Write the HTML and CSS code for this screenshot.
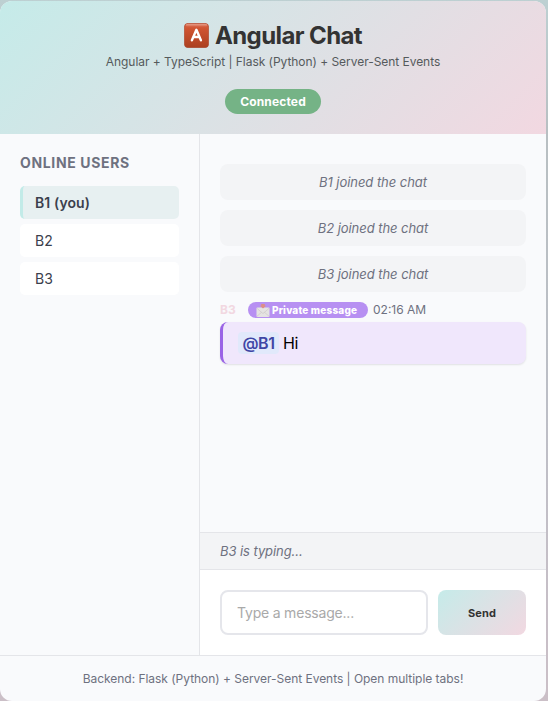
FILE: index.html
```html
<!DOCTYPE html>
<html lang="en">
<head>
<meta charset="utf-8">
<title>Angular Chat</title>
<link rel="stylesheet" href="styles.css">
</head>
<body>
<div class="chat">
  <header class="header">
    <h1 class="title">
      <svg class="logo" viewBox="0 0 25 25" aria-hidden="true">
        <defs>
          <linearGradient id="red" x1="0" y1="0" x2="0" y2="1"><stop offset="0" stop-color="#d8674a"/><stop offset=".22" stop-color="#cf5431"/><stop offset="1" stop-color="#ab4020"/></linearGradient>
          <linearGradient id="gloss" x1="0" y1="0" x2="0" y2="1"><stop offset="0" stop-color="#e59a84"/><stop offset="1" stop-color="#d8674a"/></linearGradient>
        </defs>
        <rect x=".3" y=".3" width="24.4" height="24.4" rx="4" fill="url(#red)" stroke="#a8452b" stroke-width=".6"/>
        <rect x="1.8" y="1" width="21.4" height="2.6" rx="1.3" fill="url(#gloss)"/>
        <path d="M7.9 17.300 12.4 6.800 16.900 17.300M9.4 14h6" fill="none" stroke="#fff" stroke-width="2.400" stroke-linecap="round" stroke-linejoin="round"/>
      </svg>
      <span>Angular Chat</span>
    </h1>
    <p class="subtitle">Angular + TypeScript | Flask (Python) + Server-Sent Events</p>
    <span class="status">Connected</span>
  </header>
  <div class="body">
    <aside class="sidebar">
      <h2 class="heading">ONLINE USERS</h2>
      <ul class="users">
        <li class="user me">B1 (you)</li>
        <li class="user">B2</li>
        <li class="user">B3</li>
      </ul>
    </aside>
    <main class="main">
      <div class="messages">
        <div class="system">B1 joined the chat</div>
        <div class="system">B2 joined the chat</div>
        <div class="system">B3 joined the chat</div>
        <div class="message">
          <div class="meta">
            <span class="author">B3</span>
            <span class="private">
              <svg class="mail" viewBox="0 0 14 14" aria-hidden="true">
                <rect x=".5" y="4.5" width="13" height="9.5" rx="1" fill="#e5e3e2"/>
                <path d="M.7 13.5 5.5 9.3M13.3 13.5 8.5 9.3M.7 5l5.5 5q.8.6 1.6 0l5.5-5" fill="none" stroke="#c9c5c5" stroke-width=".6"/>
                <path d="M5.200 1h3.600v1.800h1.300L7 5.400 3.900 2.800h1.300z" fill="#dc8e86"/>
              </svg>
              <span>Private message</span>
            </span>
            <span class="time">02:16 AM</span>
          </div>
          <div class="bubble"><span class="mention">@B1</span><span class="text">Hi</span></div>
        </div>
      </div>
      <div class="typing">B3 is typing...</div>
      <form class="composer">
        <input class="input" type="text" placeholder="Type a message...">
        <button class="send" type="button">Send</button>
      </form>
    </main>
  </div>
  <footer class="footer"><span>Backend: Flask (Python) + Server-Sent Events | Open multiple tabs!</span></footer>
</div>
</body>
</html>
```
FILE: styles.css
```css
* { box-sizing: border-box; margin: 0; padding: 0; }
body {
  width: 548px;
  height: 701px;
  padding: 1px 2px 0 0;
  overflow: hidden;
  font-family: Inter, "Liberation Sans", sans-serif;
  background: linear-gradient(180deg, #bdd0d2 0, #b8bfc2 130px, #bcbec6 400px, #cbbfc7 100%);
}
.chat {
  display: flex;
  flex-direction: column;
  height: 700px;
  border-radius: 12px;
  overflow: hidden;
  background: #f9fafc;
}
.header {
  height: 133px;
  padding-top: 20px;
  display: flex;
  flex-direction: column;
  align-items: center;
  background: linear-gradient(135deg, #c5ebe9 0%, #f2d8e1 100%);
}
.title {
  display: flex;
  align-items: center;
  gap: 6px;
  height: 29px;
  font-size: 24px;
  font-weight: 700;
  line-height: 29px;
  letter-spacing: -0.6px;
  color: #333;
}
.logo { width: 25px; height: 25px; }
.subtitle {
  margin-top: 4px;
  height: 16px;
  line-height: 16px;
  font-size: 12px;
  letter-spacing: -0.04px;
  color: #555a5c;
}
.status {
  margin-top: 19px;
  width: 96px;
  height: 25px;
  border-radius: 13px;
  background: #75b386;
  color: #fff;
  font-size: 12px;
  font-weight: 700;
  letter-spacing: .15px;
  line-height: 25px;
  text-align: center;
}
.body { display: flex; height: 521px; }
.sidebar {
  width: 200px;
  padding: 20px;
  border-right: 1px solid #e4e5e9;
}
.heading {
  height: 18px;
  line-height: 18px;
  font-size: 14px;
  font-weight: 700;
  letter-spacing: .65px;
  color: #6e7180;
}
.users { list-style: none; margin-top: 14px; display: flex; flex-direction: column; gap: 5px; }
.user {
  height: 33px;
  padding-left: 15px;
  border-radius: 5px;
  line-height: 34px;
  font-size: 14px;
  color: #3b404d;
  background: #fff;
}
.me {
  padding-left: 12px;
  border-left: 3px solid #c2ebe8;
  background: #e7f0f1;
  font-weight: 600;
  letter-spacing: .12px;
}
.main { flex: 1; display: flex; flex-direction: column; }
.messages { flex: 1; padding: 30px 20px 0; display: flex; flex-direction: column; gap: 10px; }
.system {
  height: 36px;
  border-radius: 8px;
  background: #f3f4f6;
  line-height: 36px;
  font-size: 13px;
  font-style: italic;
  letter-spacing: -0.05px;
  text-align: center;
  color: #6e7180;
}
.meta { display: flex; align-items: center; height: 16px; font-size: 12px; line-height: 16px; }
.author { width: 28px; font-weight: 700; color: #f2d8e1; }
.private {
  display: flex;
  align-items: center;
  gap: 2px;
  width: 120px;
  height: 16px;
  padding-left: 8px;
  border-radius: 8px;
  background: #b790f2;
  color: #fff;
  font-size: 10px;
  font-weight: 800;
  letter-spacing: .18px;
}
.mail { width: 14px; height: 14px; }
.time { margin-left: 5px; color: #6e7180; }
.bubble {
  display: flex;
  align-items: center;
  gap: 4px;
  height: 42px;
  margin-top: 4px;
  padding-left: 15px;
  border-left: 3px solid #9a63e6;
  border-radius: 8px;
  background: #f0e7fc;
  box-shadow: 0 1px 2px rgba(0, 0, 0, .1);
  font-size: 16px;
  color: #000;
}
.text { letter-spacing: -0.3px; }
.mention {
  width: 41px;
  height: 22px;
  border-radius: 4px;
  background: #e1e9fb;
  color: #3f46a5;
  font-weight: 600;
  letter-spacing: -0.4px;
  line-height: 22px;
  text-align: center;
}
.typing {
  height: 38px;
  padding-left: 20px;
  border-top: 1px solid #e4e5e9;
  border-bottom: 1px solid #e4e5e9;
  background: #f3f4f6;
  line-height: 37px;
  font-size: 13px;
  font-style: italic;
  letter-spacing: -0.07px;
  color: #6e7180;
}
.composer { display: flex; gap: 10px; height: 85px; padding: 20px; background: #fff; }
.input {
  width: 208px;
  height: 45px;
  padding: 0 15px;
  border: 2px solid #e5e6eb;
  border-radius: 8px;
  background: #fff;
  font-family: inherit;
  font-size: 14px;
  letter-spacing: -0.2px;
}
.input::placeholder { color: #a9a9a9; opacity: 1; }
.send {
  width: 88px;
  height: 45px;
  border: 0;
  border-radius: 8px;
  background: linear-gradient(135deg, #c5ebe9, #f2d8e1);
  color: #333;
  font-family: inherit;
  font-size: 11px;
  font-weight: 700;
  letter-spacing: .1px;
}
.footer {
  height: 46px;
  border-top: 1px solid #e4e5e9;
  line-height: 45px;
  text-align: center;
  font-size: 12px;
  letter-spacing: -0.03px;
  color: #6e7180;
}
```
